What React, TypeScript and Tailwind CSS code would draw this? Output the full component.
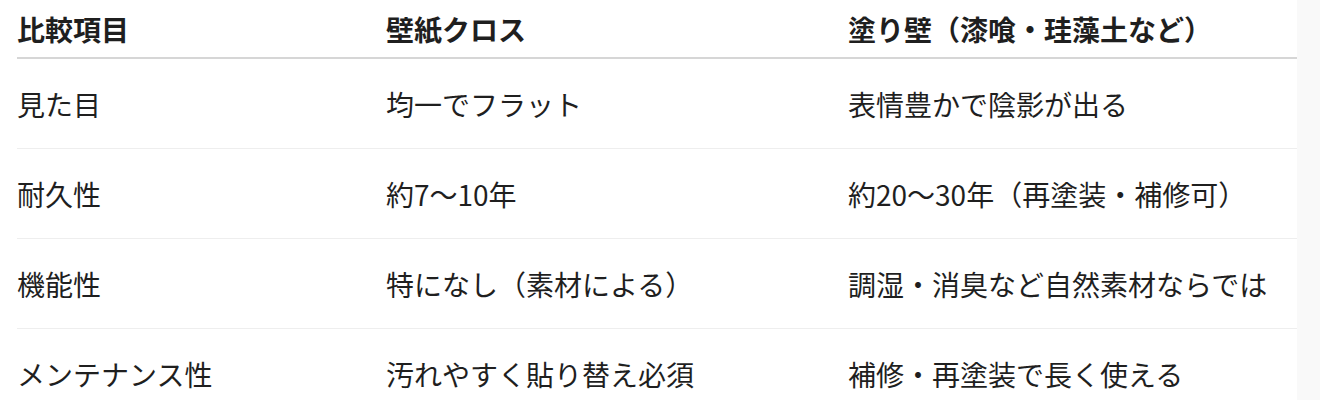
const rows = [
  { label: '見た目', cloth: '均一でフラット', plaster: '表情豊かで陰影が出る' },
  { label: '耐久性', cloth: '約7〜10年', plaster: '約20〜30年（再塗装・補修可）' },
  { label: '機能性', cloth: '特になし（素材による）', plaster: '調湿・消臭など自然素材ならでは' },
  { label: 'メンテナンス性', cloth: '汚れやすく貼り替え必須', plaster: '補修・再塗装で長く使える' },
];

export default function App() {
  return (
    <div className="flex h-[400px] w-[1320px] overflow-hidden bg-white font-['Noto_Sans_CJK_JP','Noto_Sans',sans-serif] text-[28px] leading-[38px] text-[#1f1f1f]">
      <div className="w-[1297px] pl-[17px]">
        <div className="grid h-[59px] grid-cols-[369px_462px_1fr] items-center border-b-2 border-[#d6d6d6] font-bold">
          <div>比較項目</div>
          <div>壁紙クロス</div>
          <div>塗り壁（漆喰・珪藻土など）</div>
        </div>
        {rows.map((row) => (
          <div
            key={row.label}
            className="grid h-[90px] grid-cols-[369px_462px_1fr] items-center border-b border-[#eeeeee]">
            <div>{row.label}</div>
            <div>{row.cloth}</div>
            <div>{row.plaster}</div>
          </div>
        ))}
      </div>
      <div className="flex-1 bg-[#f9f9f9]" />
    </div>
  );
}
